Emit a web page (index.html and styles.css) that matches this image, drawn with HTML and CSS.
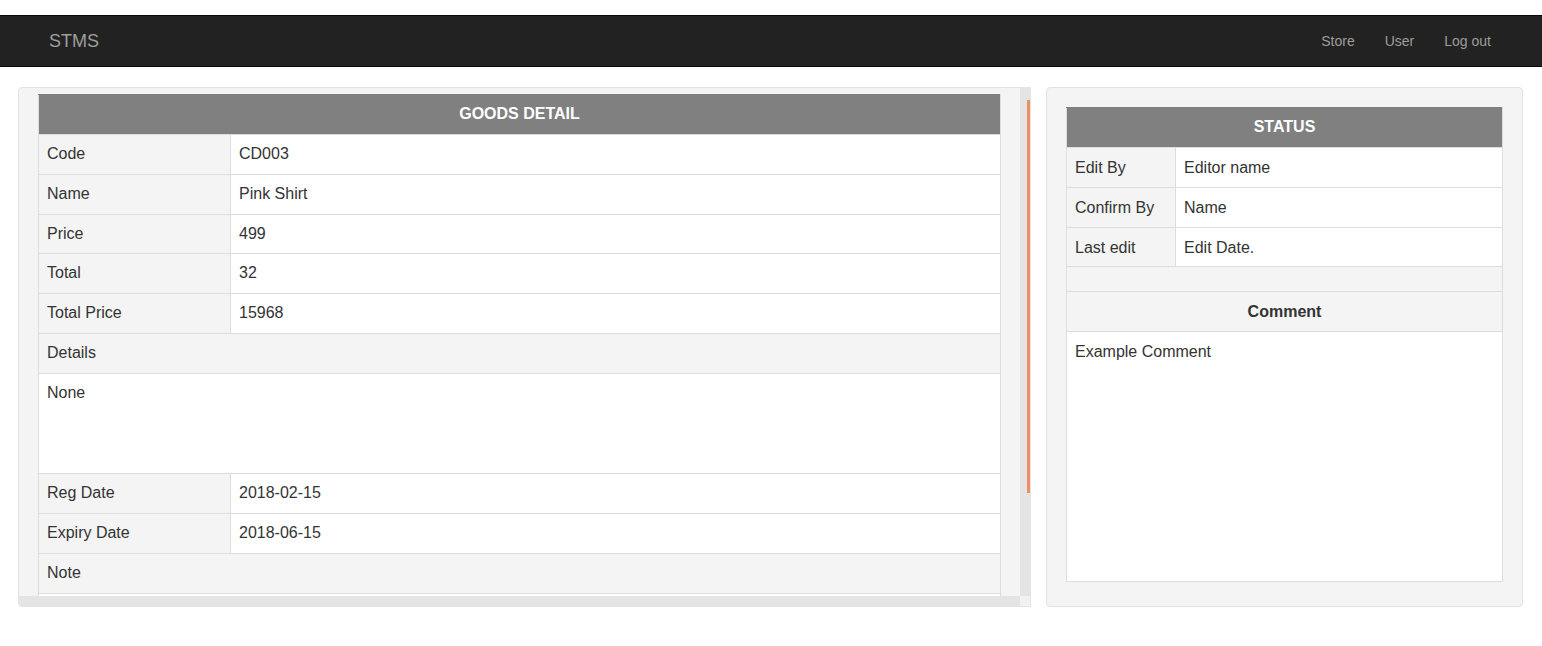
FILE: index.html
```html
<!DOCTYPE html>
<html>
<head>
<meta charset="utf-8">
<title>STMS</title>
<link rel="stylesheet" href="styles.css">
</head>
<body>
<nav class="navbar">
  <a class="brand">STMS</a>
  <ul class="nav">
    <li><a>Store</a></li>
    <li><a>User</a></li>
    <li><a>Log out</a></li>
  </ul>
</nav>
<main class="main">
  <section class="well well-left">
    <div class="scroll-row">
      <div class="scroll-content">
        <table class="tbl tbl-goods">
          <colgroup><col class="col-label-l"><col></colgroup>
          <tr><th colspan="2" class="head">GOODS DETAIL</th></tr>
          <tr><td class="lbl">Code</td><td>CD003</td></tr>
          <tr><td class="lbl">Name</td><td>Pink Shirt</td></tr>
          <tr><td class="lbl">Price</td><td>499</td></tr>
          <tr><td class="lbl">Total</td><td>32</td></tr>
          <tr><td class="lbl">Total Price</td><td>15968</td></tr>
          <tr><td class="lbl" colspan="2">Details</td></tr>
          <tr><td colspan="2" class="tall">None</td></tr>
          <tr><td class="lbl">Reg Date</td><td>2018-02-15</td></tr>
          <tr><td class="lbl">Expiry Date</td><td>2018-06-15</td></tr>
          <tr><td class="lbl" colspan="2">Note</td></tr>
          <tr><td colspan="2" class="tall"></td></tr>
        </table>
      </div>
      <div class="vtrack"><div class="vthumb"></div></div>
    </div>
    <div class="hbar">
      <div class="htrack"></div>
      <div class="corner"></div>
    </div>
  </section>
  <section class="well well-right">
    <table class="tbl tbl-status">
      <colgroup><col class="col-label-r"><col></colgroup>
      <tr><th colspan="2" class="head">STATUS</th></tr>
      <tr><td class="lbl">Edit By</td><td>Editor name</td></tr>
      <tr><td class="lbl">Confirm By</td><td>Name</td></tr>
      <tr><td class="lbl">Last edit</td><td>Edit Date.</td></tr>
      <tr><td colspan="2" class="lbl spacer"></td></tr>
      <tr><th colspan="2" class="subhead">Comment</th></tr>
      <tr><td colspan="2" class="comment">Example Comment</td></tr>
    </table>
  </section>
</main>
</body>
</html>
```
FILE: styles.css
```css
* { box-sizing: border-box; }
html, body { margin: 0; padding: 0; }
body {
  font-family: "Liberation Sans", Arial, sans-serif;
  font-size: 16px;
  color: #333;
  background: #fff;
  padding-top: 15px;
}
.navbar {
  height: 52px;
  background: #222;
  border-top: 1px solid #080808;
  border-bottom: 1px solid #080808;
  display: flex;
  align-items: center;
  justify-content: space-between;
  padding: 0 36px 0 49px;
  margin-bottom: 20px;
}
.brand {
  color: #9d9d9d;
  font-size: 18px;
  line-height: 20px;
}
.nav {
  list-style: none;
  margin: 0;
  padding: 0;
  display: flex;
}
.nav a {
  display: block;
  color: #9d9d9d;
  font-size: 14px;
  line-height: 20px;
  padding: 15px;
}
.main {
  display: flex;
  gap: 15px;
  padding: 0 19px 0 18px;
}
.well {
  background: #f4f4f4;
  border: 1px solid #e3e3e3;
  border-radius: 4px;
  height: 520px;
}
.well-left {
  width: 1013px;
  display: flex;
  flex-direction: column;
  overflow: hidden;
  border-radius: 4px 0 0 4px;
}
.scroll-row {
  display: flex;
  height: 508px;
}
.scroll-content {
  flex: 1;
  overflow: hidden;
  padding: 6px 19px 0 19px;
}
.vtrack {
  width: 10px;
  background: #e4e4e4;
  padding-top: 12px;
}
.vthumb {
  width: 3px;
  height: 393px;
  margin-left: 7px;
  background: #ee8e66;
}
.hbar {
  display: flex;
  height: 10px;
}
.htrack { flex: 1; background: #e4e4e4; }
.corner { width: 10px; background: #f1f1f1; }

.well-right {
  width: 477px;
  padding: 19px;
}
.tbl {
  width: 100%;
  border-collapse: collapse;
  background: #fff;
  line-height: 22.857px;
}
.tbl th, .tbl td {
  border: 1px solid #ddd;
  padding: 8px;
  text-align: left;
  vertical-align: top;
}
.tbl .head {
  background: #808080;
  color: #fff;
  font-weight: bold;
  text-align: center;
  border-color: #808080 #ddd #ddd #ddd;
}
.tbl-status td, .tbl-status .subhead { padding: 9px 8px 7px; }
.tbl .lbl { background: #f4f4f4; }
.col-label-l { width: 192px; }
.col-label-r { width: 109px; }
.tall { height: 100px; }
.tbl-status .spacer { height: 25px; padding: 0; }
.subhead {
  background: #f4f4f4;
  text-align: center !important;
  font-weight: bold;
}
.comment { height: 250px; }
```
